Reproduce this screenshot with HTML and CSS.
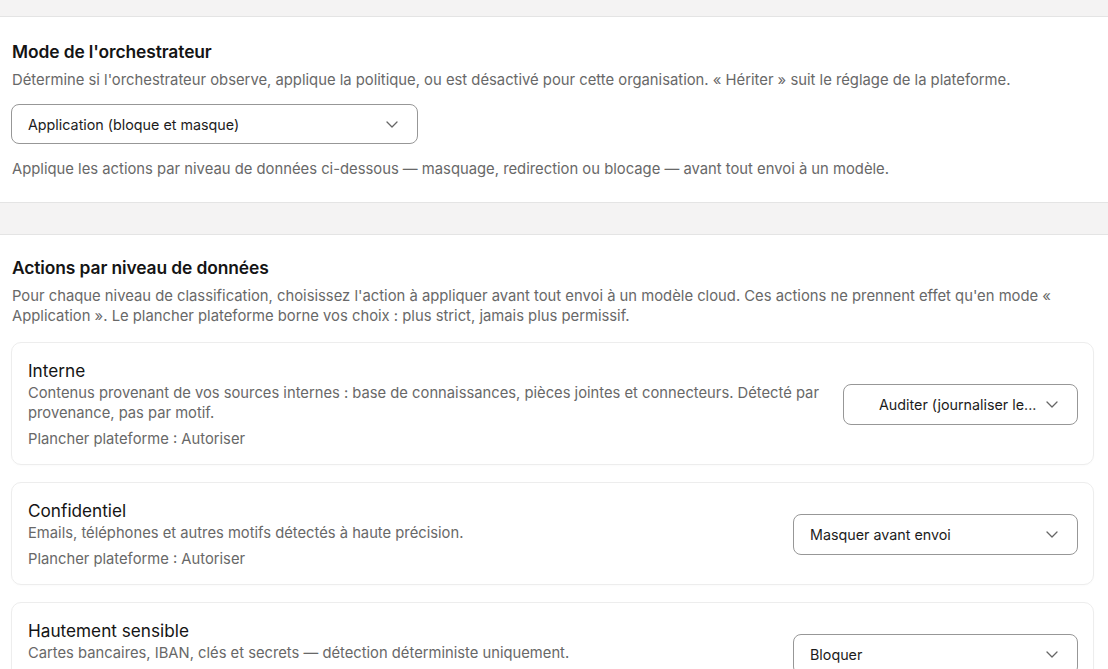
FILE: index.html
```html
<!DOCTYPE html>
<html lang="fr">
<head>
<meta charset="utf-8">
<title>Orchestrateur</title>
<link rel="stylesheet" href="styles.css">
</head>
<body>
<div class="page">
  <div class="band band-top"></div>
  <section class="section">
    <h2 class="section-title">Mode de l'orchestrateur</h2>
    <p class="section-desc">Détermine si l'orchestrateur observe, applique la politique, ou est désactivé pour cette organisation. « Hériter » suit le réglage de la plateforme.</p>
    <div class="select select-mode">
      <span class="select-label">Application (bloque et masque)</span>
      <svg class="chev" width="12" height="7" viewBox="0 0 12 7"><path d="M1 1l5 5 5-5" fill="none" stroke="#666" stroke-width="1.3" stroke-linecap="round" stroke-linejoin="round"/></svg>
    </div>
    <p class="section-help">Applique les actions par niveau de données ci-dessous — masquage, redirection ou blocage — avant tout envoi à un modèle.</p>
  </section>
  <div class="band band-mid"></div>
  <section class="section section-levels">
    <h2 class="section-title">Actions par niveau de données</h2>
    <p class="section-desc">Pour chaque niveau de classification, choisissez l'action à appliquer avant tout envoi à un modèle cloud. Ces actions ne prennent effet qu'en mode « Application ». Le plancher plateforme borne vos choix : plus strict, jamais plus permissif.</p>
    <div class="cards">
      <div class="card">
        <div class="card-text">
          <h3 class="card-title">Interne</h3>
          <p class="card-desc">Contenus provenant de vos sources internes : base de connaissances, pièces jointes et connecteurs. Détecté par provenance, pas par motif.</p>
          <p class="card-floor">Plancher plateforme : Autoriser</p>
        </div>
        <div class="select select-card select-narrow">
          <span class="select-label">Auditer (journaliser le...</span>
          <svg class="chev" width="12" height="7" viewBox="0 0 12 7"><path d="M1 1l5 5 5-5" fill="none" stroke="#666" stroke-width="1.3" stroke-linecap="round" stroke-linejoin="round"/></svg>
        </div>
      </div>
      <div class="card">
        <div class="card-text">
          <h3 class="card-title">Confidentiel</h3>
          <p class="card-desc">Emails, téléphones et autres motifs détectés à haute précision.</p>
          <p class="card-floor">Plancher plateforme : Autoriser</p>
        </div>
        <div class="select select-card">
          <span class="select-label">Masquer avant envoi</span>
          <svg class="chev" width="12" height="7" viewBox="0 0 12 7"><path d="M1 1l5 5 5-5" fill="none" stroke="#666" stroke-width="1.3" stroke-linecap="round" stroke-linejoin="round"/></svg>
        </div>
      </div>
      <div class="card">
        <div class="card-text">
          <h3 class="card-title">Hautement sensible</h3>
          <p class="card-desc">Cartes bancaires, IBAN, clés et secrets — détection déterministe uniquement.</p>
          <p class="card-floor">Plancher plateforme : Bloquer</p>
        </div>
        <div class="select select-card">
          <span class="select-label">Bloquer</span>
          <svg class="chev" width="12" height="7" viewBox="0 0 12 7"><path d="M1 1l5 5 5-5" fill="none" stroke="#666" stroke-width="1.3" stroke-linecap="round" stroke-linejoin="round"/></svg>
        </div>
      </div>
    </div>
  </section>
</div>
</body>
</html>
```

FILE: styles.css
```css
* { box-sizing: border-box; }
html, body { margin: 0; padding: 0; background: #ffffff; }
body {
  font-family: Inter, "Noto Sans", "Liberation Sans", sans-serif;
  color: #1c1c1c;
  -webkit-font-smoothing: antialiased;
}
.page { display: flex; flex-direction: column; }
.band { background: #f4f3f3; }
.band-top { height: 17px; border-bottom: 1px solid #e4e4e4; }
.band-mid { height: 33px; border-top: 1px solid #e4e4e4; border-bottom: 1px solid #e4e4e4; }
.section { padding: 23px 11px 23px 12px; background: #fff; }
.section-levels { padding-top: 21px; }
.section-title {
  margin: 0;
  font-size: 17.4px;
  font-weight: 600;
  line-height: 24px;
  color: #141414;
  letter-spacing: -0.1px;
}
.section-desc, .section-help {
  margin: 6px 0 0;
  font-size: 14.8px;
  line-height: 20px;
  color: #686868;
}
.section-help { margin-top: 15px; }
.select {
  display: flex;
  align-items: center;
  justify-content: space-between;
  height: 40px;
  border: 1px solid #979797;
  border-radius: 8px;
  padding: 0 19px 0 16px;
  font-size: 14.3px;
  color: #1c1c1c;
  background: #fff;
}
.select-mode { width: 407px; margin-top: 14px; margin-left: -1px; }
.select-card { width: 285px; flex: none; height: 41px; }
.select-narrow { width: 235px; padding-left: 35px; }
.chev { flex: none; }
.cards { display: flex; flex-direction: column; gap: 17px; margin: 16px 0 0 -1px; width: 1083px; }
.card {
  display: flex;
  align-items: center;
  gap: 18px;
  border: 1px solid #ededed;
  border-radius: 10px;
  padding: 16px 15px 15px 16px;
  box-shadow: 0 1px 2px rgba(0,0,0,0.02);
}
.card-text { flex: 1; min-width: 0; }
.card-title { margin: 0; font-size: 17.2px; font-weight: 400; line-height: 24px; color: #141414; }
.card-desc { margin: 0; font-size: 14.75px; line-height: 20px; color: #686868; }
.card-floor { margin: 6px 0 0; font-size: 14.75px; line-height: 20px; color: #686868; }
```
